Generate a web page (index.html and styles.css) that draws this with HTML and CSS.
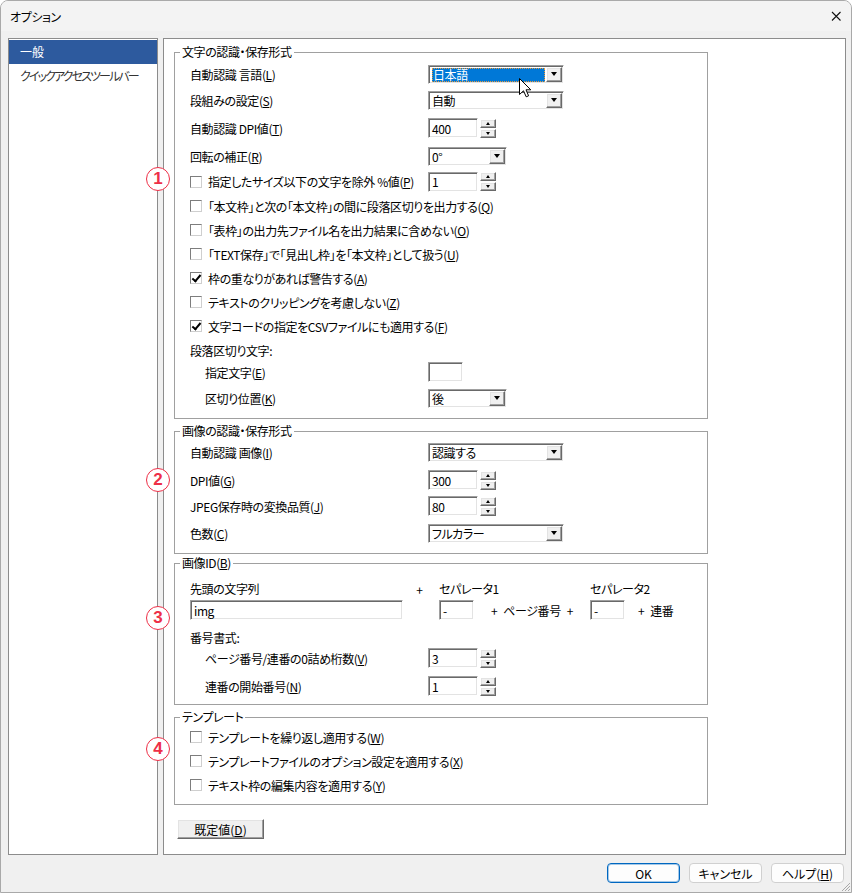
FILE: index.html
```html
<!DOCTYPE html>
<html lang="ja">

<head>
    <meta charset="UTF-8">
    <meta name="viewport" content="width=device-width, initial-scale=1.0">
    <title>オプション</title>
    <link rel="stylesheet" href="styles.css">
</head>

<body>
    <div class="window">
        <div class="titlebar">
            <span class="title">オプション</span>
            <svg class="close" width="10" height="10" viewBox="0 0 10 10">
                <path d="M1 1L9.5 9.5M9.5 1L1 9.5" stroke="#111" stroke-width="1.1" fill="none" />
            </svg>
        </div>

        <div class="content">
            <ul class="nav">
                <li class="nav-item active">一般</li>
                <li class="nav-item">クイックアクセスツールバー</li>
            </ul>

            <div class="panel">
                <!-- 文字の認識・保存形式 -->
                <div class="group g1">
                    <div class="group-title">文字の認識・保存形式</div>
                    <div class="group-body">
                        <div class="row r26">
                            <span class="label">自動認識 言語(<u>L</u>)</span>
                            <div class="combo w136"><span class="val sel">日本語</span><span class="drop"></span></div>
                        </div>
                        <div class="row r26">
                            <span class="label">段組みの設定(<u>S</u>)</span>
                            <div class="combo w136"><span class="val">自動</span><span class="drop"></span></div>
                        </div>
                        <div class="row r30">
                            <span class="label">自動認識 DPI値(<u>T</u>)</span>
                            <div class="spin">
                                <div class="edit w50">400</div>
                                <div class="spin-btns"><span class="spin-btn up"></span><span class="spin-btn down"></span></div>
                            </div>
                        </div>
                        <div class="row r26">
                            <span class="label">回転の補正(<u>R</u>)</span>
                            <div class="combo w79"><span class="val">0°</span><span class="drop"></span></div>
                        </div>
                        <div class="row r25">
                            <span class="label"><span class="cb"></span>指定したサイズ以下の文字を除外 %値(<u>P</u>)</span>
                            <div class="spin">
                                <div class="edit w50">1</div>
                                <div class="spin-btns"><span class="spin-btn up"></span><span class="spin-btn down"></span></div>
                            </div>
                        </div>
                        <div class="row r24"><span class="cb"></span>「本文枠」と次の「本文枠」の間に段落区切りを出力する(<u>Q</u>)</div>
                        <div class="row r24"><span class="cb"></span>「表枠」の出力先ファイル名を出力結果に含めない(<u>O</u>)</div>
                        <div class="row r24"><span class="cb"></span>「TEXT保存」で「見出し枠」を「本文枠」として扱う(<u>U</u>)</div>
                        <div class="row r24"><span class="cb checked"></span>枠の重なりがあれば警告する(<u>A</u>)</div>
                        <div class="row r24"><span class="cb"></span>テキストのクリッピングを考慮しない(<u>Z</u>)</div>
                        <div class="row r24"><span class="cb checked"></span>文字コードの指定をCSVファイルにも適用する(<u>F</u>)</div>
                        <div class="row r24">段落区切り文字:</div>
                        <div class="row r20 indent">
                            <span class="label">指定文字(<u>E</u>)</span>
                            <div class="edit w34"></div>
                        </div>
                        <div class="row r32 indent">
                            <span class="label">区切り位置(<u>K</u>)</span>
                            <div class="combo w79"><span class="val">後</span><span class="drop"></span></div>
                        </div>
                    </div>
                </div>

                <!-- 画像の認識・保存形式 -->
                <div class="group g2">
                    <div class="group-title">画像の認識・保存形式</div>
                    <div class="group-body">
                        <div class="row r26">
                            <span class="label">自動認識 画像(<u>I</u>)</span>
                            <div class="combo w136"><span class="val">認識する</span><span class="drop"></span></div>
                        </div>
                        <div class="row r30">
                            <span class="label">DPI値(<u>G</u>)</span>
                            <div class="spin">
                                <div class="edit w50">300</div>
                                <div class="spin-btns"><span class="spin-btn up"></span><span class="spin-btn down"></span></div>
                            </div>
                        </div>
                        <div class="row r22">
                            <span class="label">JPEG保存時の変換品質(<u>J</u>)</span>
                            <div class="spin">
                                <div class="edit w50">80</div>
                                <div class="spin-btns"><span class="spin-btn up"></span><span class="spin-btn down"></span></div>
                            </div>
                        </div>
                        <div class="row r32">
                            <span class="label">色数(<u>C</u>)</span>
                            <div class="combo w136"><span class="val">フルカラー</span><span class="drop"></span></div>
                        </div>
                    </div>
                </div>

                <!-- 画像ID -->
                <div class="group g3">
                    <div class="group-title">画像ID(<u>B</u>)</div>
                    <div class="group-body">
                        <div class="idgrid">
                            <span>先頭の文字列</span>
                            <span class="plus">+</span>
                            <span class="sep1">セパレータ1</span>
                            <span class="sep2">セパレータ2</span>

                            <div class="edit">img</div>
                            <span></span>
                            <div class="edit">-</div>
                            <span class="joint"><span>+</span><span>ページ番号</span><span>+</span></span>
                            <div class="edit">-</div>
                            <span class="joint tail"><span>+</span><span>連番</span></span>
                        </div>
                        <div class="row r20 mt7">番号書式:</div>
                        <div class="row r20 mt1 indent">
                            <span class="label">ページ番号/連番の0詰め桁数(<u>V</u>)</span>
                            <div class="spin">
                                <div class="edit w50">3</div>
                                <div class="spin-btns"><span class="spin-btn up"></span><span class="spin-btn down"></span></div>
                            </div>
                        </div>
                        <div class="row r20 mt8 indent">
                            <span class="label">連番の開始番号(<u>N</u>)</span>
                            <div class="spin">
                                <div class="edit w50">1</div>
                                <div class="spin-btns"><span class="spin-btn up"></span><span class="spin-btn down"></span></div>
                            </div>
                        </div>
                    </div>
                </div>

                <!-- テンプレート -->
                <div class="group g4">
                    <div class="group-title">テンプレート</div>
                    <div class="group-body">
                        <div class="row r24"><span class="cb"></span>テンプレートを繰り返し適用する(<u>W</u>)</div>
                        <div class="row r24"><span class="cb"></span>テンプレートファイルのオプション設定を適用する(<u>X</u>)</div>
                        <div class="row r24"><span class="cb"></span>テキスト枠の編集内容を適用する(<u>Y</u>)</div>
                    </div>
                </div>

                <button class="classic-btn">既定値(<u>D</u>)</button>
            </div>
        </div>

        <div class="footer">
            <button class="btn default">OK</button>
            <button class="btn">キャンセル</button>
            <button class="btn">ヘルプ(<u>H</u>)</button>
        </div>

        <!-- 注釈の丸数字 -->
        <span class="mark m1">1</span>
        <span class="mark m2">2</span>
        <span class="mark m3">3</span>
        <span class="mark m4">4</span>

        <svg class="cursor" width="13" height="20" viewBox="0 0 13 20">
            <path d="M0.5 0.5L0.5 16.5L4.5 12.8L7.2 18.8L9.6 17.8L7 11.8L11.8 11.8Z" fill="#fff" stroke="#000" stroke-width="1" stroke-linejoin="round" />
        </svg>

        <svg class="grip" width="12" height="12" viewBox="0 0 12 12">
            <path d="M11 3L3 11M11 6L6 11M11 9L9 11" stroke="#a8a8a8" stroke-width="1" fill="none" />
        </svg>
    </div>
</body>

</html>
```

FILE: styles.css
```css
* {
    margin: 0;
    padding: 0;
    box-sizing: border-box;
}

body {
    background-color: #fff;
    font-family: "Noto Sans CJK JP", "Liberation Sans", sans-serif;
    font-size: 12px;
    color: #000;
    font-feature-settings: "palt";
    letter-spacing: -0.4px;
}

u {
    text-decoration: underline;
    text-underline-offset: 1px;
}

.window {
    position: relative;
    width: 852px;
    height: 893px;
    background-color: #f0f0f0;
    border: 1px solid #a9a9a9;
    border-radius: 8px 8px 0 0;
    overflow: hidden;
}

.titlebar {
    display: flex;
    align-items: center;
    justify-content: space-between;
    height: 30px;
    padding: 0 10px 0 9px;
    background-color: #f3f3f3;
}

.content {
    display: flex;
    gap: 5px;
    padding: 7px 5px 0 7px;
}

.nav {
    list-style: none;
    width: 150px;
    height: 817px;
    padding-top: 1px;
    background-color: #fff;
    border: 1px solid #8c8c8c;
}

.nav-item {
    height: 24px;
    line-height: 24px;
    padding-left: 11px;
    color: #333;
    white-space: nowrap;
    letter-spacing: -1.9px;
}

.nav-item.active {
    background-color: #2d5a9e;
    color: #fff;
    letter-spacing: 0;
}

.panel {
    width: 683px;
    height: 817px;
    padding-left: 10px;
    background-color: #fff;
    border: 1px solid #8c8c8c;
}

/* group box */
.group {
    width: 534px;
    padding: 0 15px;
    border: 1px solid #a0a0a0;
}

.group-title {
    display: table;
    height: 14px;
    line-height: 14px;
    margin: -8px 0 0 -10px;
    padding: 0 2px;
    background-color: #fff;
    white-space: nowrap;
}

.g1 { margin-top: 13px; }
.g1 .group-body { padding: 2px 0 4px; }
.g2 { margin-top: 12px; }
.g2 .group-body { padding: 1px 0 4px; }
.g3 { margin-top: 9px; }
.g3 .group-body { padding: 6px 0 8px; }
.g4 { margin-top: 12px; }
.g4 .group-body { padding: 1px 0 7px; }

.row {
    display: flex;
    align-items: center;
    white-space: nowrap;
}

.r20 { height: 20px; }
.r22 { height: 22px; }
.r24 { height: 24px; }
.r25 { height: 25px; }
.r26 { height: 26px; }
.r30 { height: 30px; }
.r32 { height: 32px; }
.mt1 { margin-top: 1px; }
.mt7 { margin-top: 7px; }
.mt8 { margin-top: 8px; }

.label {
    display: flex;
    align-items: center;
    width: 238px;
    flex: none;
}

.indent {
    padding-left: 15px;
}

.indent .label {
    width: 223px;
}

/* checkbox */
.cb {
    position: relative;
    flex: none;
    width: 12px;
    height: 12px;
    margin-right: 6px;
    background-color: #fff;
    border: 1px solid;
    border-color: #7d7d7d #cfcfcf #cfcfcf #7d7d7d;
}

.cb.checked::after {
    content: "";
    position: absolute;
    left: 3px;
    top: 0px;
    width: 3px;
    height: 7px;
    border: solid #000;
    border-width: 0 2px 2px 0;
    transform: rotate(40deg);
}

/* sunken controls */
.edit,
.combo {
    height: 20px;
    background-color: #fff;
    border: 1px solid;
    border-color: #a0a0a0 #fff #fff #a0a0a0;
    box-shadow: inset 1px 1px 0 #696969, inset -1px -1px 0 #e3e3e3;
}

.edit {
    display: flex;
    align-items: center;
    padding-left: 3px;
    white-space: nowrap;
}

.combo {
    display: flex;
    height: 19px;
    padding: 1px;
}

.w34 { width: 35px; }
.w50 { width: 50px; }
.w79 { width: 79px; }
.w136 { width: 136px; }

.val {
    flex: 1;
    display: flex;
    align-items: center;
    padding-left: 2px;
    white-space: nowrap;
}

.val.sel {
    margin: 1px 1px 0 2px;
    padding-left: 1px;
    background-color: #0078d7;
    color: #fff;
    outline: 1px dotted #e89a3c;
    outline-offset: -1px;
}

.drop,
.spin-btn,
.classic-btn {
    background-color: #f0f0f0;
    border: 1px solid;
    border-color: #fff #696969 #696969 #fff;
    box-shadow: inset -1px -1px 0 #a0a0a0, inset 1px 1px 0 #e3e3e3;
}

.drop {
    display: flex;
    align-items: center;
    justify-content: center;
    width: 16px;
    flex: none;
}

.drop::after {
    content: "";
    border-style: solid;
    border-width: 4px 3.5px 0 3.5px;
    border-color: #000 transparent transparent transparent;
}

.spin {
    display: flex;
    align-items: center;
    gap: 2px;
}

.spin-btns {
    display: flex;
    flex-direction: column;
    gap: 1px;
}

.spin-btn {
    display: flex;
    align-items: center;
    justify-content: center;
    width: 16px;
    height: 9px;
}

.spin-btn.up::after {
    content: "";
    border-style: solid;
    border-width: 0 2.5px 3px 2.5px;
    border-color: transparent transparent #000 transparent;
}

.spin-btn.down::after {
    content: "";
    border-style: solid;
    border-width: 3px 2.5px 0 2.5px;
    border-color: #000 transparent transparent transparent;
}

/* 画像ID grid */
.idgrid {
    display: grid;
    grid-template-columns: 213px 36px 35px 116px 35px auto;
    grid-template-rows: 24px 20px;
    align-items: center;
    white-space: nowrap;
}

.plus {
    justify-self: center;
    margin: 3px 3px 0 0;
}

.sep1 {
    grid-column: 3 / span 2;
}

.sep2 {
    grid-column: 5 / span 2;
}

.idgrid .edit {
    height: 20px;
}

.joint {
    display: flex;
    justify-content: center;
    gap: 6px;
}

.joint.tail {
    justify-content: flex-start;
    padding-left: 13px;
}

.classic-btn {
    display: block;
    width: 87px;
    height: 20px;
    margin: 14px 0 0 3px;
    font: inherit;
    color: #000;
}

/* dialog buttons */
.footer {
    display: flex;
    justify-content: flex-end;
    gap: 9px;
    padding: 8px 7px 0 0;
}

.btn {
    width: 73px;
    height: 20px;
    font: inherit;
    color: #000;
    background-color: #fdfdfd;
    border: 1px solid #d0d0d0;
    border-radius: 4px;
}

.btn.default {
    border-color: #0067c0;
    box-shadow: inset 0 0 0 1px rgba(0, 103, 192, 0.35);
}

/* annotations */
.mark {
    position: absolute;
    left: 145px;
    display: flex;
    align-items: center;
    justify-content: center;
    width: 24px;
    height: 24px;
    border: 1.5px solid #ee2f47;
    border-radius: 50%;
    background-color: #fff;
    color: #ee2f47;
    font: bold 17px "Liberation Sans", sans-serif;
    letter-spacing: 0;
}

.m1 { top: 166px; }
.m2 { top: 467px; }
.m3 { top: 605px; }
.m4 { top: 736px; }

.cursor {
    position: absolute;
    left: 518px;
    top: 77px;
}

.grip {
    position: absolute;
    right: 0;
    bottom: 0;
}
```
